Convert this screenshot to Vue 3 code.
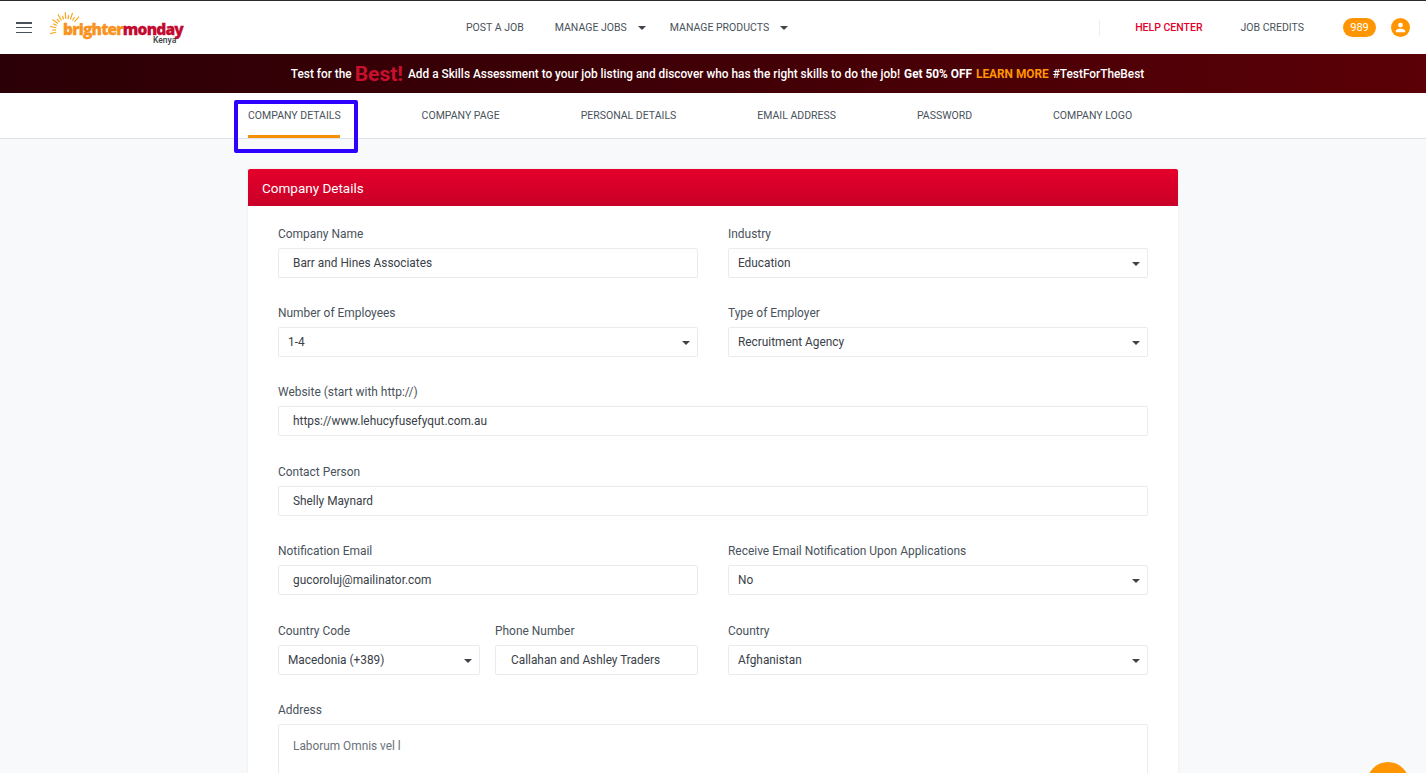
<script setup>
const tabs = ['COMPANY DETAILS', 'COMPANY PAGE', 'PERSONAL DETAILS', 'EMAIL ADDRESS', 'PASSWORD', 'COMPANY LOGO']
const rays = Array.from({ length: 13 }, (_, i) => {
  const a = (-192 + i * 12) * Math.PI / 180
  const r1 = 11, r2 = i % 2 ? 15 : 18
  return { x1: 17 + Math.cos(a) * r1, y1: 23 + Math.sin(a) * r1, x2: 17 + Math.cos(a) * r2, y2: 23 + Math.sin(a) * r2 }
})
</script>

<template>
  <div class="page">
    <header class="topbar">
      <button class="burger" aria-label="Menu"><span></span><span></span><span></span></button>
      <div class="logo">
        <svg class="sun" width="36" height="30" viewBox="0 0 36 30">
          <line v-for="(r, i) in rays" :key="i" :x1="r.x1" :y1="r.y1" :x2="r.x2" :y2="r.y2" stroke="#f7a823" stroke-width="1.2" />
        </svg>
        <div class="wordmark"><span class="w-orange">brighter</span><span class="w-red">monday</span></div>
        <div class="kenya">Kenya</div>
      </div>
      <nav class="mainnav">
        <a class="post">POST A JOB</a>
        <a class="manage">MANAGE JOBS <i class="caret nav-caret"></i></a>
        <a class="products">MANAGE PRODUCTS <i class="caret nav-caret"></i></a>
      </nav>
      <div class="right">
        <span class="divider"></span>
        <a class="help">HELP CENTER</a>
        <a class="credits">JOB CREDITS</a>
        <span class="badge">989</span>
        <span class="avatar">
          <svg width="11" height="11" viewBox="0 0 24 24" fill="#fff"><path d="M12 12a5.2 5.2 0 1 0 0-10.4A5.2 5.2 0 0 0 12 12zm0 2.6c-3.5 0-10.4 1.7-10.4 5.2v2.6h20.8v-2.6c0-3.5-6.9-5.2-10.4-5.2z" /></svg>
        </span>
      </div>
    </header>

    <div class="banner">
      <span>Test for the</span><strong class="best">Best!</strong><span class="add">Add a Skills Assessment to your job listing and discover who has the right skills to do the job!</span>
      <strong>Get 50% OFF</strong>
      <strong class="learn">LEARN MORE</strong>
      <span>#TestForTheBest</span>
    </div>

    <div class="tabs">
      <a v-for="(t, i) in tabs" :key="t" class="tab" :class="{ active: i === 0 }">{{ t }}</a>
    </div>

    <main class="content">
      <section class="card">
        <h2 class="card-head">Company Details</h2>
        <div class="form">
          <div class="row two">
            <div class="field"><label>Company Name</label><div class="input">Barr and Hines Associates</div></div>
            <div class="field"><label>Industry</label><div class="input select">Education<i class="caret"></i></div></div>
          </div>
          <div class="row two">
            <div class="field"><label>Number of Employees</label><div class="input select">1-4<i class="caret"></i></div></div>
            <div class="field"><label>Type of Employer</label><div class="input select">Recruitment Agency<i class="caret"></i></div></div>
          </div>
          <div class="row tall">
            <div class="field"><label>Website (start with http://)</label><div class="input">https://www.lehucyfusefyqut.com.au</div></div>
          </div>
          <div class="row">
            <div class="field"><label>Contact Person</label><div class="input">Shelly Maynard</div></div>
          </div>
          <div class="row two tall">
            <div class="field"><label>Notification Email</label><div class="input">gucoroluj@mailinator.com</div></div>
            <div class="field"><label>Receive Email Notification Upon Applications</label><div class="input select">No<i class="caret"></i></div></div>
          </div>
          <div class="row two">
            <div class="phone">
              <div class="field code"><label>Country Code</label><div class="input select">Macedonia (+389)<i class="caret"></i></div></div>
              <div class="field"><label>Phone Number</label><div class="input wide">Callahan and Ashley Traders</div></div>
            </div>
            <div class="field"><label>Country</label><div class="input select">Afghanistan<i class="caret"></i></div></div>
          </div>
          <div class="row">
            <div class="field"><label>Address</label><div class="input area">Laborum Omnis vel l</div></div>
          </div>
        </div>
      </section>
    </main>

    <div class="highlight"></div>
    <div class="fab"></div>
  </div>
</template>

<style>
html, body { margin: 0; overflow: hidden; }
</style>

<style scoped>
.page {
  height: 773px;
  overflow: hidden;
  background: #f8f9fb;
  font-family: Roboto, "Liberation Sans", sans-serif;
  color: #49525b;
  position: relative;
}
.topbar {
  height: 53px;
  border-top: 1px solid #2a2a2a;
  background: #fff;
  display: flex;
  align-items: center;
  position: relative;
  font-size: 10.5px;
  color: #49525b;
}
.burger {
  width: 16px;
  height: 11px;
  margin-left: 16px;
  padding: 0;
  border: 0;
  background: none;
  display: flex;
  flex-direction: column;
  justify-content: space-between;
}
.burger span { display: block; height: 1.5px; background: #49525b; }
.logo { position: relative; width: 136px; height: 40px; margin-left: 18px; margin-top: -2px; }
.sun { position: absolute; left: 0; top: 0; }
.wordmark {
  position: absolute;
  left: 13px;
  top: 16.5px;
  font-family: "Open Sans", sans-serif;
  font-weight: 800;
  font-size: 15.5px;
  line-height: 12px;
  letter-spacing: -0.78px;
  -webkit-text-stroke: 0.3px currentColor;
  white-space: nowrap;
}
.w-orange { color: #f7931e; display: inline-block; }
.w-red { color: #c2092f; display: inline-block; }
.kenya {
  position: absolute;
  left: 103px;
  top: 29px;
  font-size: 8.5px;
  line-height: 9px;
  font-weight: 500;
  color: #3b3f44;
}
.mainnav { position: absolute; left: 466px; top: 0; height: 53px; display: flex; align-items: center; white-space: nowrap; }
.mainnav a { display: flex; align-items: center; }
.manage { margin-left: 31px; }
.products { margin-left: 24px; }
.nav-caret { margin-left: 11px; }
.right { margin-left: auto; display: flex; align-items: center; padding-right: 16px; }
.divider { width: 1px; height: 16px; background: #eceef0; margin-right: 35px; }
.help { color: #e3002b; font-weight: 500; }
.credits { margin-left: 38px; }
.badge {
  margin-left: 39px;
  width: 33px;
  height: 19px;
  border-radius: 10px;
  background: #ff9500;
  color: #fff;
  font-size: 11px;
  display: flex;
  align-items: center;
  justify-content: center;
}
.avatar {
  margin-left: 15px;
  width: 19px;
  height: 19px;
  border-radius: 50%;
  background: #ff9500;
  display: flex;
  align-items: center;
  justify-content: center;
}
.banner {
  height: 39px;
  padding-left: 9px;
  box-sizing: border-box;
  background: linear-gradient(90deg, #2b0006 0%, #3b0006 40%, #5a0006 100%);
  color: #fff;
  display: flex;
  align-items: center;
  justify-content: center;
  gap: 4px;
  font-size: 11.85px;
  font-weight: 500;
  white-space: pre;
}
.banner strong { font-weight: 700; }
.best { color: #c8102e; font-size: 21px; line-height: 24px; margin-left: -1px; }
.add { margin-left: 1px; }
.learn { color: #ff9500; }
.tabs {
  height: 46px;
  box-sizing: border-box;
  background: #fff;
  border-bottom: 1px solid #dfe2e6;
  padding-left: 248px;
  display: flex;
  gap: 80.95px;
  font-size: 10.5px;
}
.tab { height: 45px; box-sizing: border-box; padding-top: 16px; line-height: 13px; color: #49525b; white-space: nowrap; }
.tab.active { position: relative; }
.tab.active::after {
  content: "";
  position: absolute;
  left: 0;
  width: 92px;
  top: 42px;
  height: 3px;
  background: #f79009;
}
.content { padding-top: 30px; display: flex; padding-left: 248px; }
.card {
  width: 930px;
  background: #fff;
  box-shadow: 0 0 3px rgba(30, 40, 60, 0.08);
  border-radius: 2px 2px 0 0;
}
.card-head {
  margin: 0;
  height: 37px;
  padding-left: 14px;
  line-height: 38px;
  font-size: 13.5px;
  font-weight: 400;
  color: #fff;
  background: linear-gradient(180deg, #e4002b 0%, #c90028 100%);
  border-radius: 2px 2px 0 0;
}
.form { padding: 21px 30px 0; }
.row { margin-bottom: 28px; }
.row.tall { margin-bottom: 29px; }
.row.two { display: grid; grid-template-columns: 420px 420px; gap: 30px; }
.phone { display: grid; grid-template-columns: 202px 203px; gap: 15px; }
.field { min-width: 0; }
label {
  display: block;
  height: 15px;
  margin-bottom: 6px;
  font-size: 11.95px;
  line-height: 15px;
  color: #49525b;
}
.input {
  height: 30px;
  box-sizing: border-box;
  border: 1px solid #e9ebee;
  border-radius: 2px;
  background: #fff;
  padding-left: 14px;
  font-size: 11.85px;
  line-height: 28px;
  color: #3a4148;
  position: relative;
}
.input.wide { padding-left: 15px; }
.input.select { padding-left: 9px; }
.input.area { height: 120px; padding-top: 7px; color: #6a7178; }
.caret {
  display: inline-block;
  width: 0;
  height: 0;
  border-left: 4px solid transparent;
  border-right: 4px solid transparent;
  border-top: 4px solid #3f444a;
}
.select .caret { position: absolute; right: 7px; top: 13px; }
.highlight {
  position: absolute;
  left: 234px;
  top: 100px;
  width: 116px;
  height: 45px;
  border: 4px solid #2d00ff;
  border-radius: 2px;
}
.fab {
  position: absolute;
  left: 1367px;
  top: 762px;
  width: 42px;
  height: 42px;
  border-radius: 50%;
  background: #ff9500;
}
</style>
